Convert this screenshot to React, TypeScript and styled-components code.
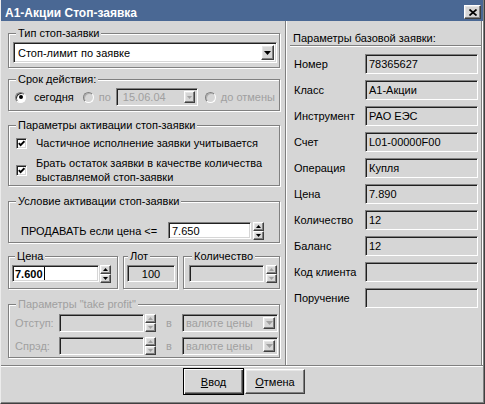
import React from 'react'
import styled, { createGlobalStyle, css } from 'styled-components'

const BG = '#d6d6d6'
const DIS = '#a0a0a0'

const GlobalStyle = createGlobalStyle`
  * { box-sizing: border-box; }
  html, body { margin: 0; padding: 0; background: ${BG}; }
  body {
    font-family: "Liberation Sans", Arial, sans-serif;
    font-size: 11px;
    line-height: 14px;
    color: #000;
  }
`

const raised = css`
  background: ${BG};
  border: 1px solid;
  border-color: #fff #404040 #404040 #fff;
  box-shadow: inset -1px -1px 0 #808080, inset 1px 1px 0 #e6e6e6;
`

const sunken = css`
  border: 1px solid;
  border-color: #808080 #fff #fff #808080;
  box-shadow: inset 1px 1px 0 #202020, inset -1px -1px 0 ${BG};
`

const Window = styled.div`
  width: 485px;
  height: 404px;
  background: ${BG};
  border-left: 1px solid #ececec;
  border-right: 1px solid #404040;
  border-bottom: 1px solid #404040;
  padding: 0 1px 1px 0;
  box-shadow: inset -1px -1px 0 #808080;
  display: flex;
  flex-direction: column;
  overflow: hidden;
`

const TitleBar = styled.div`
  height: 21px;
  flex-shrink: 0;
  background: #4a6894;
  color: #fff;
  display: flex;
  justify-content: space-between;
  align-items: flex-start;
  padding: 0 2px 0 4px;
`

const TitleText = styled.span`
  margin-top: 6px;
  font-size: 12px;
  font-weight: bold;
  line-height: 14px;
  white-space: nowrap;
`

const CloseButton = styled.span`
  ${raised};
  margin-top: 5px;
  width: 17px;
  height: 14px;
  display: flex;
  align-items: center;
  justify-content: center;
`

const Body = styled.div`
  height: 344px;
  flex-shrink: 0;
  display: flex;
`

const LeftColumn = styled.div`
  width: 284px;
  flex-shrink: 0;
  padding: 0 5px 0 7px;
  display: flex;
  flex-direction: column;
`

const Group = styled.div<{ $mt: number; $h: number; $w?: number }>`
  position: relative;
  flex-shrink: 0;
  margin-top: ${(p) => p.$mt}px;
  height: ${(p) => p.$h}px;
  width: ${(p) => (p.$w ? `${p.$w}px` : '100%')};
  border: 1px solid #808080;
  box-shadow: inset 1px 1px 0 #fff, 1px 1px 0 #fff;
`

const Caption = styled.span<{ $disabled?: boolean; $left?: number }>`
  position: absolute;
  top: -8px;
  left: ${(p) => p.$left ?? 7}px;
  padding: 0 2px;
  background: ${BG};
  line-height: 14px;
  white-space: nowrap;
  color: ${(p) => (p.$disabled ? DIS : '#000')};
`

const GroupBody = styled.div<{ $pad: string }>`
  padding: ${(p) => p.$pad};
`

const GroupRow = styled.div`
  display: flex;
  gap: 5px;
  margin-top: 13px;
  flex-shrink: 0;
`

const SelectBox = styled.div<{ $w: number; $h: number; $disabled?: boolean }>`
  ${sunken};
  width: ${(p) => p.$w}px;
  height: ${(p) => p.$h}px;
  flex-shrink: 0;
  background: ${(p) => (p.$disabled ? BG : '#fff')};
  display: flex;
  align-items: stretch;
  justify-content: space-between;
  padding: 2px;
`

const SelectText = styled.span<{ $disabled?: boolean; $pad?: number }>`
  display: flex;
  align-items: center;
  padding-left: ${(p) => p.$pad ?? 2}px;
  white-space: nowrap;
  color: ${(p) => (p.$disabled ? DIS : '#000')};
`

const DropButton = styled.span<{ $w: number }>`
  ${raised};
  width: ${(p) => p.$w}px;
  display: flex;
  align-items: center;
  justify-content: center;
`

const RadioRow = styled.div`
  display: flex;
  align-items: center;
  height: 18px;
`

const RadioMark = styled.span<{ $checked?: boolean; $disabled?: boolean; $ml?: number }>`
  width: 11px;
  height: 11px;
  flex-shrink: 0;
  margin-left: ${(p) => p.$ml ?? 0}px;
  border-radius: 50%;
  border: 1px solid;
  border-color: #808080 #fff #fff #808080;
  box-shadow: inset 1px 1px 0 ${(p) => (p.$disabled ? '#b0b0b0' : '#303030')};
  background: ${(p) => (p.$disabled ? BG : '#fff')};
  display: flex;
  align-items: center;
  justify-content: center;

  &::after {
    content: '';
    display: ${(p) => (p.$checked ? 'block' : 'none')};
    width: 4px;
    height: 4px;
    border-radius: 50%;
    background: #000;
  }
`

const OptionText = styled.span<{ $disabled?: boolean; $ml: number }>`
  margin-left: ${(p) => p.$ml}px;
  white-space: nowrap;
  color: ${(p) => (p.$disabled ? DIS : '#000')};
`

const CheckRow = styled.div<{ $mt?: number }>`
  display: flex;
  align-items: center;
  margin-top: ${(p) => p.$mt ?? 0}px;
`

const CheckBox = styled.span`
  ${sunken};
  width: 11px;
  height: 11px;
  flex-shrink: 0;
  background: #fff;
  display: flex;
  align-items: center;
  justify-content: center;
`

const CheckText = styled.span`
  margin-left: 9px;
  line-height: 14px;
`

const FieldRow = styled.div`
  display: flex;
  align-items: flex-start;
`

const ConditionLabel = styled.span`
  width: 147px;
  height: 17px;
  display: flex;
  align-items: center;
  white-space: nowrap;
`

const NumField = styled.div<{
  $w: number
  $h: number
  $white?: boolean
  $center?: boolean
  $bold?: boolean
  $mr?: number
}>`
  ${sunken};
  width: ${(p) => p.$w}px;
  height: ${(p) => p.$h}px;
  flex-shrink: 0;
  margin-right: ${(p) => p.$mr ?? 1}px;
  background: ${(p) => (p.$white ? '#fff' : BG)};
  padding: 0 3px;
  display: flex;
  align-items: center;
  justify-content: ${(p) => (p.$center ? 'center' : 'flex-start')};
  font-weight: ${(p) => (p.$bold ? 'bold' : 'normal')};
  white-space: nowrap;
`

const Caret = styled.span`
  display: inline-block;
  width: 1px;
  height: 13px;
  margin-left: 1px;
  background: #000;
`

const SpinStack = styled.div<{ $h: number }>`
  display: flex;
  flex-direction: column;
  width: 11px;
  height: ${(p) => p.$h}px;
  flex-shrink: 0;
`

const SpinButton = styled.span`
  ${raised};
  flex: 1;
  display: flex;
  align-items: center;
  justify-content: center;
`

const TpRow = styled.div`
  display: flex;
  align-items: center;
  height: 18px;

  & + & {
    margin-top: 5px;
  }
`

const TpLabel = styled.span`
  width: 44px;
  color: ${DIS};
  white-space: nowrap;
`

const Preposition = styled.span`
  width: 26px;
  text-align: center;
  color: ${DIS};
`

const RightPanel = styled.div`
  flex: 1;
  border-left: 1px solid #808080;
  border-right: 1px solid #fff;
  box-shadow: inset 1px 0 0 #fff, inset -1px 0 0 #808080;
  padding: 10px 1px 0 4px;
`

const PanelHeading = styled.div`
  padding-left: 3px;
  line-height: 14px;
  border-bottom: 1px solid #808080;
  box-shadow: 0 1px 0 #fff;
`

const InfoGrid = styled.div`
  margin-top: 8px;
  display: grid;
  grid-template-columns: 75px 113px;
  grid-auto-rows: 20px;
  row-gap: 6px;
  align-items: center;
`

const InfoLabel = styled.span`
  padding-left: 4px;
  white-space: nowrap;
`

const InfoField = styled.div`
  ${sunken};
  height: 20px;
  background: ${BG};
  padding-left: 3px;
  display: flex;
  align-items: center;
  white-space: nowrap;
`

const Separator = styled.div`
  height: 2px;
  flex-shrink: 0;
  border-top: 1px solid #808080;
  border-bottom: 1px solid #fff;
`

const ButtonRow = styled.div`
  flex: 1;
  display: flex;
  justify-content: center;
  align-items: flex-start;
  gap: 1px;
  padding: 1px 0 0 4px;
`

const PushButton = styled.button<{ $default?: boolean }>`
  font: inherit;
  color: #000;
  padding: 0;
  background: ${BG};
  border: 1px solid;
  ${(p) =>
    p.$default
      ? css`
          width: 61px;
          height: 27px;
          border-color: #000;
          box-shadow: inset 1px 1px 0 #fff, inset -1px -1px 0 #404040, inset -2px -2px 0 #808080;
        `
      : css`
          width: 60px;
          height: 25px;
          margin-top: 1px;
          border-color: #fff #404040 #404040 #fff;
          box-shadow: inset -1px -1px 0 #808080, inset 1px 1px 0 #e6e6e6;
        `}
`

function DownArrow({ color = '#000' }: { color?: string }) {
  return (
    <svg width="7" height="4" viewBox="0 0 7 4">
      <polygon points="0,0 7,0 3.5,4" fill={color} />
    </svg>
  )
}

function SmallArrow({ up, color = '#000' }: { up?: boolean; color?: string }) {
  return (
    <svg width="5" height="3" viewBox="0 0 5 3">
      <polygon points={up ? '2.5,0 5,3 0,3' : '0,0 5,0 2.5,3'} fill={color} />
    </svg>
  )
}

function Spin({ h, disabled }: { h: number; disabled?: boolean }) {
  const color = disabled ? DIS : '#000'
  return (
    <SpinStack $h={h}>
      <SpinButton>
        <SmallArrow up color={color} />
      </SpinButton>
      <SpinButton>
        <SmallArrow color={color} />
      </SpinButton>
    </SpinStack>
  )
}

const infoRows: [string, string][] = [
  ['Номер', '78365627'],
  ['Класс', 'A1-Акции'],
  ['Инструмент', 'РАО ЕЭС'],
  ['Счет', 'L01-00000F00'],
  ['Операция', 'Купля'],
  ['Цена', '7.890'],
  ['Количество', '12'],
  ['Баланс', '12'],
  ['Код клиента', ''],
  ['Поручение', ''],
]

export default function App() {
  return (
    <>
      <GlobalStyle />
      <Window>
        <TitleBar>
          <TitleText>A1-Акции Стоп-заявка</TitleText>
          <CloseButton>
            <svg width="8" height="7" viewBox="0 0 8 7">
              <path d="M0.5 0.5 L7.5 6.5 M7.5 0.5 L0.5 6.5" stroke="#000" strokeWidth="1.7" />
            </svg>
          </CloseButton>
        </TitleBar>

        <Body>
          <LeftColumn>
            <Group $mt={12} $h={35}>
              <Caption>Тип стоп-заявки</Caption>
              <GroupBody $pad="8px 0 0 4px">
                <SelectBox $w={264} $h={21}>
                  <SelectText>Стоп-лимит по заявке</SelectText>
                  <DropButton $w={13}>
                    <DownArrow />
                  </DropButton>
                </SelectBox>
              </GroupBody>
            </Group>

            <Group $mt={11} $h={32}>
              <Caption>Срок действия:</Caption>
              <GroupBody $pad="8px 0 0 6px">
                <RadioRow>
                  <RadioMark $checked />
                  <OptionText $ml={8}>сегодня</OptionText>
                  <RadioMark $disabled $ml={9} />
                  <OptionText $disabled $ml={5}>
                    по
                  </OptionText>
                  <SelectBox $w={82} $h={18} $disabled style={{ marginLeft: 5 }}>
                    <SelectText $disabled $pad={4}>
                      15.06.04
                    </SelectText>
                    <DropButton $w={11}>
                      <SmallArrow color={DIS} />
                    </DropButton>
                  </SelectBox>
                  <RadioMark $disabled $ml={7} />
                  <OptionText $disabled $ml={5}>
                    до отмены
                  </OptionText>
                </RadioRow>
              </GroupBody>
            </Group>

            <Group $mt={14} $h={61}>
              <Caption>Параметры активации стоп-заявки</Caption>
              <GroupBody $pad="10px 0 0 7px">
                <CheckRow>
                  <CheckBox>
                    <svg width="7" height="7" viewBox="0 0 7 7">
                      <polyline points="0.8,3.2 2.6,5.2 6.4,1.2" fill="none" stroke="#000" strokeWidth="1.8" />
                    </svg>
                  </CheckBox>
                  <CheckText>Частичное исполнение заявки учитывается</CheckText>
                </CheckRow>
                <CheckRow $mt={6}>
                  <CheckBox>
                    <svg width="7" height="7" viewBox="0 0 7 7">
                      <polyline points="0.8,3.2 2.6,5.2 6.4,1.2" fill="none" stroke="#000" strokeWidth="1.8" />
                    </svg>
                  </CheckBox>
                  <CheckText>
                    Брать остаток заявки в качестве количества
                    <br />
                    выставляемой стоп-заявки
                  </CheckText>
                </CheckRow>
              </GroupBody>
            </Group>

            <Group $mt={15} $h={42}>
              <Caption>Условие активации стоп-заявки</Caption>
              <GroupBody $pad="20px 0 0 12px">
                <FieldRow>
                  <ConditionLabel>ПРОДАВАТЬ если цена &lt;=</ConditionLabel>
                  <NumField $w={83} $h={17} $white $mr={2}>
                    7.650
                  </NumField>
                  <Spin h={18} />
                </FieldRow>
              </GroupBody>
            </Group>

            <GroupRow>
              <Group $mt={0} $h={33} $w={110}>
                <Caption $left={6}>Цена</Caption>
                <GroupBody $pad="8px 0 0 3px">
                  <FieldRow>
                    <NumField $w={87} $h={17} $white $bold style={{ paddingLeft: 2 }}>
                      7.600
                      <Caret />
                    </NumField>
                    <Spin h={18} />
                  </FieldRow>
                </GroupBody>
              </Group>
              <Group $mt={0} $h={33} $w={55}>
                <Caption $left={4}>Лот</Caption>
                <GroupBody $pad="8px 0 0 3px">
                  <NumField $w={48} $h={17} $center>
                    100
                  </NumField>
                </GroupBody>
              </Group>
              <Group $mt={0} $h={33} $w={97}>
                <Caption $left={8}>Количество</Caption>
                <GroupBody $pad="8px 0 0 5px">
                  <FieldRow>
                    <NumField $w={75} $h={17} $mr={2} />
                    <Spin h={18} disabled />
                  </FieldRow>
                </GroupBody>
              </Group>
            </GroupRow>

            <Group $mt={15} $h={54}>
              <Caption $disabled>Параметры "take profit"</Caption>
              <GroupBody $pad="9px 0 0 6px">
                {['Отступ:', 'Спрэд:'].map((label) => (
                  <TpRow key={label}>
                    <TpLabel>{label}</TpLabel>
                    <NumField $w={85} $h={18} />
                    <Spin h={18} disabled />
                    <Preposition>в</Preposition>
                    <SelectBox $w={96} $h={18} $disabled>
                      <SelectText $disabled $pad={1}>
                        валюте цены
                      </SelectText>
                      <DropButton $w={12}>
                        <DownArrow color={DIS} />
                      </DropButton>
                    </SelectBox>
                  </TpRow>
                ))}
              </GroupBody>
            </Group>
          </LeftColumn>

          <RightPanel>
            <PanelHeading>Параметры базовой заявки:</PanelHeading>
            <InfoGrid>
              {infoRows.map(([label, value]) => (
                <React.Fragment key={label}>
                  <InfoLabel>{label}</InfoLabel>
                  <InfoField>{value}</InfoField>
                </React.Fragment>
              ))}
            </InfoGrid>
          </RightPanel>
        </Body>

        <Separator />

        <ButtonRow>
          <PushButton $default>
            <u>В</u>вод
          </PushButton>
          <PushButton>
            <u>О</u>тмена
          </PushButton>
        </ButtonRow>
      </Window>
    </>
  )
}
